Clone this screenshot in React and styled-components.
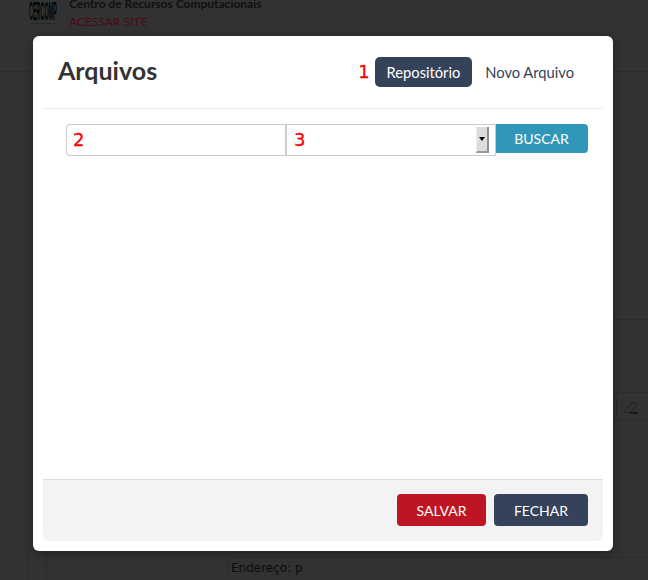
import styled, { createGlobalStyle } from 'styled-components';

const GlobalStyle = createGlobalStyle`
	html, body {
		margin: 0;
		padding: 0;
		background: #323232;
		font-family: Lato, "Open Sans", sans-serif;
		overflow: hidden;
	}
`;

const Page = styled.div`
	position: relative;
	width: 648px;
	height: 580px;
	overflow: hidden;
	color: #0c0c0c;
`;

/* page behind the dimmed backdrop */
const SiteHeader = styled.header`
	display: flex;
	gap: 12px;
	height: 72px;
	box-sizing: border-box;
	padding-left: 29px;
	border-bottom: 1px solid #2c2c2c;
`;

const Logo = styled.div`
	width: 28px;
`;

const LogoMark = styled.div`
	font: 700 26px/22px "Liberation Sans", sans-serif;
	color: #050505;
	transform: scaleX(0.21);
	transform-origin: left top;
	white-space: nowrap;
`;

const LogoSub = styled.div`
	padding-left: 2px;
	font: 1.5px/4px "Liberation Sans", sans-serif;
	color: #111;
	white-space: nowrap;
`;

const SiteInfo = styled.div`
	margin-top: -4px;
`;

const SiteName = styled.div`
	font-size: 12px;
	font-weight: 700;
	line-height: 16px;
	color: #101010;
`;

const SiteLink = styled.div`
	font-size: 12px;
	line-height: 18px;
	margin-top: 1px;
	color: #460c14;
`;

const Content = styled.div`
	display: grid;
	grid-template-columns: 28px 19px 181px 1fr;
	height: 508px;
`;

const Rail = styled.div`
	border-right: 1px solid ${(props) => props.$line ? '#2c2c2c' : 'transparent'};
`;

const Main = styled.div`
	display: flex;
	flex-direction: column;
`;

const Divider = styled.div`
	height: ${(props) => props.$height}px;
	box-sizing: border-box;
	border-bottom: 1px solid #2c2c2c;
`;

const Toolbar = styled.div`
	display: flex;
	justify-content: flex-end;
	align-items: center;
	gap: 6px;
	height: 28px;
	box-sizing: border-box;
	padding-right: 9px;
	border-bottom: 1px solid #2c2c2c;
`;

const ToolSeparator = styled.div`
	width: 1px;
	height: 16px;
	background: #262626;
`;

const Address = styled.div`
	border-left: 1px solid #2c2c2c;
	padding: 0 2px;
	font: 12px/20px "DejaVu Sans", sans-serif;
	color: #0c0c0c;
`;

/* modal */
const Modal = styled.div`
	position: absolute;
	left: 33px;
	top: 36px;
	width: 580px;
	height: 515px;
	box-sizing: border-box;
	padding: 7px 10px 10px;
	display: flex;
	flex-direction: column;
	background: #fff;
	border-radius: 6px;
	box-shadow: 0 2px 8px rgba(0, 0, 0, 0.35);
`;

const ModalHeader = styled.div`
	display: flex;
	align-items: center;
	height: 66px;
	box-sizing: border-box;
	padding: 0 17px 7px 15px;
	border-bottom: 1px solid #eee;
`;

const Title = styled.h2`
	flex: 1;
	margin: 0 0 5px;
	font-size: 25px;
	font-weight: 700;
	color: #333;
`;

const Marker = styled.span`
	font: 18px/24px "DejaVu Sans", sans-serif;
	color: #f00;
	-webkit-text-stroke: 0.3px #f00;
`;

const Tab = styled.button`
	height: 30px;
	padding: 0 12px;
	margin-left: ${(props) => props.$first ? '5px' : '1px'};
	border: 0;
	border-radius: 5px;
	background: ${(props) => props.$active ? '#34425a' : 'transparent'};
	color: ${(props) => props.$active ? '#fff' : '#34425a'};
	font: 14.7px Lato, sans-serif;
`;

const ModalBody = styled.div`
	flex: 1;
	padding: 15px 15px 0 23px;
`;

const SearchRow = styled.div`
	display: flex;
	align-items: flex-start;
`;

const Field = styled.div`
	height: 32px;
	box-sizing: border-box;
	width: ${(props) => props.$width}px;
	padding-left: ${(props) => props.$joined ? '7px' : '6px'};
	display: flex;
	align-items: center;
	position: relative;
	background: #fff;
	border: 1px solid #ccc;
	border-left-width: ${(props) => props.$joined ? '2px' : '1px'};
	border-right-width: ${(props) => props.$joined ? '1px' : '0'};
	border-radius: ${(props) => props.$joined ? '0' : '4px 0 0 4px'};
`;

const ScrollArrow = styled.div`
	position: absolute;
	right: 6px;
	top: 2px;
	width: 13px;
	height: 26px;
	box-sizing: border-box;
	display: flex;
	align-items: center;
	justify-content: center;
	background: #dcdcdc;
	border-right: 2px solid #8f8f8f;
	border-bottom: 2px solid #9a9a9a;
	border-left: 1px solid #efefef;

	&::after {
		content: '';
		border-style: solid;
		border-width: 4px 3.5px 0;
		border-color: #000 transparent transparent;
	}
`;

const SearchButton = styled.button`
	width: 93px;
	height: 29px;
	margin-left: -1px;
	padding: 0;
	border: 0;
	border-radius: 0 4px 4px 0;
	background: #3197b8;
	color: #fff;
	font: 14px Lato, sans-serif;
`;

const ModalFooter = styled.div`
	display: flex;
	justify-content: flex-end;
	gap: 8px;
	height: 62px;
	box-sizing: border-box;
	padding: 14px 15px 0;
	background: #f3f3f3;
	border-top: 1px solid #ddd;
	border-radius: 0 0 6px 6px;
`;

const FooterButton = styled.button`
	width: ${(props) => props.$width}px;
	height: 32px;
	padding: 0;
	border: 0;
	border-radius: 4px;
	background: ${(props) => props.$bg};
	color: #fff;
	font: 14px Lato, sans-serif;
`;

const Eraser = () => (
	<svg width="16" height="14" viewBox="0 0 16 14" fill="none" stroke="#1b2230" strokeWidth="1">
		<path d="M1.5 10 8.5 3.5Q9.5 2.5 11 2.7L12.5 3.2Q14 4 13 6L7.5 12.5H4Q2.5 12.5 1.5 11.5Q1 10.5 1.5 10Z" />
		<path d="M7 13H15" stroke="#0c0c0c" strokeWidth="1.2" />
	</svg>
);

const App = () => {
	return (
		<>
			<GlobalStyle />
			<Page>
				<SiteHeader>
					<Logo>
						<LogoMark>CERCOMP</LogoMark>
						<LogoSub>Centro de Recursos Computacionais</LogoSub>
					</Logo>
					<SiteInfo>
						<SiteName>Centro de Recursos Computacionais</SiteName>
						<SiteLink>ACESSAR SITE</SiteLink>
					</SiteInfo>
				</SiteHeader>
				<Content>
					<Rail $line />
					<Rail $line />
					<Rail />
					<Main>
						<Divider $height={248} />
						<Divider $height={73} />
						<Toolbar>
							<ToolSeparator />
							<Eraser />
						</Toolbar>
						<Divider $height={137} />
						<Address>Endereço: p</Address>
					</Main>
				</Content>
				<Modal>
					<ModalHeader>
						<Title>Arquivos</Title>
						<Marker>1</Marker>
						<Tab $active $first>Repositório</Tab>
						<Tab>Novo Arquivo</Tab>
					</ModalHeader>
					<ModalBody>
						<SearchRow>
							<Field $width={219}>
								<Marker>2</Marker>
							</Field>
							<Field $width={211} $joined>
								<Marker>3</Marker>
								<ScrollArrow />
							</Field>
							<SearchButton>BUSCAR</SearchButton>
						</SearchRow>
					</ModalBody>
					<ModalFooter>
						<FooterButton $width={89} $bg="#bd1524">SALVAR</FooterButton>
						<FooterButton $width={94} $bg="#34425a">FECHAR</FooterButton>
					</ModalFooter>
				</Modal>
			</Page>
		</>
	);
};

export default App;
